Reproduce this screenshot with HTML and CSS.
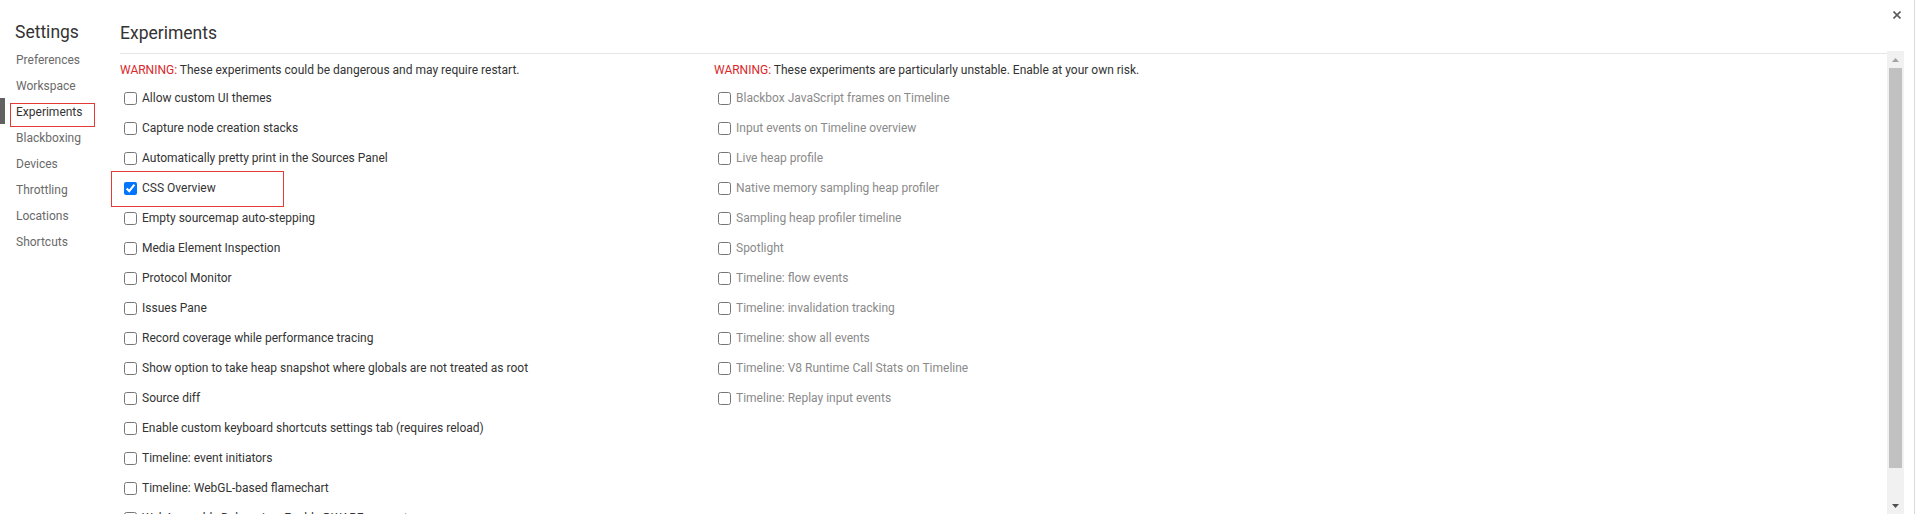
FILE: index.html
```html
<!DOCTYPE html>
<html lang="en">
<head>
<meta charset="utf-8">
<title>Settings - Experiments</title>
<link rel="stylesheet" href="styles.css">
</head>
<body>
<div class="window">
  <aside class="sidebar">
    <h1 class="sidebar-title">Settings</h1>
    <nav class="tabs">
      <div class="tab">Preferences</div>
      <div class="tab">Workspace</div>
      <div class="tab selected marked">Experiments</div>
      <div class="tab">Blackboxing</div>
      <div class="tab">Devices</div>
      <div class="tab">Throttling</div>
      <div class="tab">Locations</div>
      <div class="tab">Shortcuts</div>
    </nav>
  </aside>

  <main class="panel">
    <header class="panel-header">
      <h2 class="panel-title">Experiments</h2>
      <button class="close" aria-label="Close">
        <svg width="8" height="8" viewBox="0 0 8 8"><path d="M0.5 0.5 L7.5 7.5 M7.5 0.5 L0.5 7.5" stroke="#5c5c5c" stroke-width="1.6" fill="none"/></svg>
      </button>
    </header>

    <div class="panel-body">
      <div class="scroll-content">
        <div class="divider"></div>
        <div class="columns">
          <section class="col">
            <p class="warning"><span class="warn">WARNING:</span> These experiments could be dangerous and may require restart.</p>
            <label class="exp"><input type="checkbox"><span>Allow custom UI themes</span></label>
            <label class="exp"><input type="checkbox"><span>Capture node creation stacks</span></label>
            <label class="exp"><input type="checkbox"><span>Automatically pretty print in the Sources Panel</span></label>
            <label class="exp marked-row"><input type="checkbox" checked><span>CSS Overview</span></label>
            <label class="exp"><input type="checkbox"><span>Empty sourcemap auto-stepping</span></label>
            <label class="exp"><input type="checkbox"><span>Media Element Inspection</span></label>
            <label class="exp"><input type="checkbox"><span>Protocol Monitor</span></label>
            <label class="exp"><input type="checkbox"><span>Issues Pane</span></label>
            <label class="exp"><input type="checkbox"><span>Record coverage while performance tracing</span></label>
            <label class="exp"><input type="checkbox"><span>Show option to take heap snapshot where globals are not treated as root</span></label>
            <label class="exp"><input type="checkbox"><span>Source diff</span></label>
            <label class="exp"><input type="checkbox"><span>Enable custom keyboard shortcuts settings tab (requires reload)</span></label>
            <label class="exp"><input type="checkbox"><span>Timeline: event initiators</span></label>
            <label class="exp"><input type="checkbox"><span>Timeline: WebGL-based flamechart</span></label>
            <label class="exp"><input type="checkbox"><span>WebAssembly Debugging: Enable DWARF support</span></label>
          </section>
          <section class="col unstable">
            <p class="warning"><span class="warn">WARNING:</span> These experiments are particularly unstable. Enable at your own risk.</p>
            <label class="exp"><input type="checkbox"><span>Blackbox JavaScript frames on Timeline</span></label>
            <label class="exp"><input type="checkbox"><span>Input events on Timeline overview</span></label>
            <label class="exp"><input type="checkbox"><span>Live heap profile</span></label>
            <label class="exp"><input type="checkbox"><span>Native memory sampling heap profiler</span></label>
            <label class="exp"><input type="checkbox"><span>Sampling heap profiler timeline</span></label>
            <label class="exp"><input type="checkbox"><span>Spotlight</span></label>
            <label class="exp"><input type="checkbox"><span>Timeline: flow events</span></label>
            <label class="exp"><input type="checkbox"><span>Timeline: invalidation tracking</span></label>
            <label class="exp"><input type="checkbox"><span>Timeline: show all events</span></label>
            <label class="exp"><input type="checkbox"><span>Timeline: V8 Runtime Call Stats on Timeline</span></label>
            <label class="exp"><input type="checkbox"><span>Timeline: Replay input events</span></label>
          </section>
        </div>
      </div>

      <div class="scrollbar">
        <div class="sb-btn">
          <svg width="7" height="4" viewBox="0 0 7 4"><path d="M3.5 0 L7 4 L0 4 Z" fill="#a3a3a3"/></svg>
        </div>
        <div class="sb-track"><div class="sb-thumb"></div></div>
        <div class="sb-btn">
          <svg width="7" height="4" viewBox="0 0 7 4"><path d="M0 0 L7 0 L3.5 4 Z" fill="#505050"/></svg>
        </div>
      </div>
    </div>
  </main>

  <div class="edge"></div>
</div>
</body>
</html>
```

FILE: styles.css
```css
* { box-sizing: border-box; }

html, body {
  margin: 0;
  padding: 0;
  background: #fff;
  overflow: hidden;
}

body {
  font-family: Roboto, "Noto Sans", Arial, sans-serif;
  font-size: 12px;
  color: #333;
}

.window {
  display: flex;
  width: 1917px;
  height: 514px;
  overflow: hidden;
}

/* ---------- sidebar ---------- */
.sidebar {
  width: 100px;
  flex: none;
  display: flex;
  flex-direction: column;
}

.sidebar-title {
  margin: 0;
  padding: 20px 0 0 15px;
  height: 47px;
  font-size: 17.5px;
  line-height: 24px;
  font-weight: 400;
  color: #333;
}

.tabs {
  display: flex;
  flex-direction: column;
}

.tab {
  height: 26px;
  line-height: 26px;
  padding-left: 16px;
  color: #6a6a6a;
  position: relative;
}

.tab.selected {
  color: #333;
}

.tab.selected::before {
  content: "";
  position: absolute;
  left: 0;
  top: -1px;
  width: 5px;
  height: 26px;
  background: #616161;
}

/* red annotation box drawn over the selected tab */
.marked::after {
  content: "";
  position: absolute;
  left: 10px;
  width: 83px;
  top: 4px;
  height: 22px;
  border: 1px solid #e53935;
  pointer-events: none;
}

/* ---------- panel ---------- */
.panel {
  flex: 1;
  display: flex;
  flex-direction: column;
  min-width: 0;
}

.panel-header {
  height: 51px;
  flex: none;
  padding-left: 20px;
  display: flex;
  justify-content: space-between;
  align-items: flex-start;
}

.panel-title {
  margin: 0;
  padding-top: 21px;
  font-size: 17.5px;
  line-height: 24px;
  font-weight: 400;
  color: #333;
}

.close {
  margin-top: 10px;
  width: 14px;
  height: 10px;
  padding: 0;
  border: 0;
  background: none;
  line-height: 0;
  display: flex;
  align-items: center;
  justify-content: center;
}

.panel-body {
  flex: 1;
  display: flex;
  min-height: 0;
}

.scroll-content {
  flex: 1;
  overflow: hidden;
  padding: 2px 0 0 20px;
}

.divider {
  height: 1px;
  background: #e6e6e6;
}

.columns {
  display: grid;
  grid-template-columns: 594px 1fr;
}

.col {
  display: flex;
  flex-direction: column;
}

.warning {
  margin: 6px 0 3px;
  line-height: 20px;
  color: #333;
}

.warn {
  color: #d9292b;
}

.exp {
  position: relative;
  height: 30px;
  display: flex;
  align-items: center;
  color: #333;
  white-space: nowrap;
}

.exp input {
  margin: 0 5px 0 4px;
  width: 13px;
  height: 13px;
  flex: none;
}

.unstable .exp {
  color: #8a8a8a;
}

/* red annotation box drawn over the CSS Overview row */
.marked-row::after {
  content: "";
  position: absolute;
  left: -9px;
  width: 171px;
  top: -2px;
  height: 34px;
  border: 1px solid #e53935;
  pointer-events: none;
}

/* ---------- fake scrollbar ---------- */
.scrollbar {
  width: 17px;
  flex: none;
  background: #f1f1f1;
  display: flex;
  flex-direction: column;
}

.sb-btn {
  height: 17px;
  flex: none;
  display: flex;
  align-items: center;
  justify-content: center;
}

.sb-track {
  flex: 1;
  padding: 0 2px;
}

.sb-thumb {
  height: 400px;
  background: #c1c1c1;
}

/* ---------- window edge ---------- */
.edge {
  width: 13px;
  flex: none;
  background: linear-gradient(to right, #fff 10px, #dadada 10px, #dadada 11px, #fff 11px);
}
```
